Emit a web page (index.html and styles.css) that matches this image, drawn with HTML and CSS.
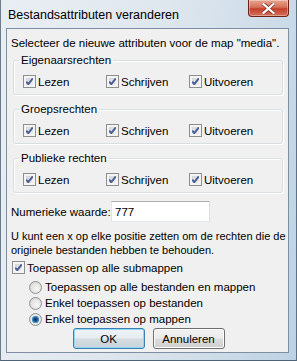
FILE: index.html
```html
<!DOCTYPE html>
<html lang="nl">
<head>
    <meta charset="UTF-8">
    <title>Bestandsattributen veranderen</title>
    <link rel="stylesheet" href="styles.css">
</head>
<body>
    <div class="window">
        <!-- Title bar -->
        <div class="titlebar">
            <span class="title">Bestandsattributen veranderen</span>
            <span class="close">
                <svg width="13" height="11" viewBox="0 0 13 11">
                    <path d="M1.5 1 L11.5 10 M11.5 1 L1.5 10" stroke="#7a2a20" stroke-width="3.6" stroke-linecap="square"/>
                    <path d="M1.5 1 L11.5 10 M11.5 1 L1.5 10" stroke="#ffffff" stroke-width="2.2" stroke-linecap="square"/>
                </svg>
            </span>
        </div>

        <div class="client">
            <p class="intro">Selecteer de nieuwe attributen voor de map "media".</p>

            <fieldset class="group">
                <legend>Eigenaarsrechten</legend>
                <div class="perm-row">
                    <label class="check"><span class="box checked"></span>Lezen</label>
                    <label class="check"><span class="box checked"></span>Schrijven</label>
                    <label class="check"><span class="box checked"></span>Uitvoeren</label>
                </div>
            </fieldset>

            <fieldset class="group">
                <legend>Groepsrechten</legend>
                <div class="perm-row">
                    <label class="check"><span class="box checked"></span>Lezen</label>
                    <label class="check"><span class="box checked"></span>Schrijven</label>
                    <label class="check"><span class="box checked"></span>Uitvoeren</label>
                </div>
            </fieldset>

            <fieldset class="group">
                <legend>Publieke rechten</legend>
                <div class="perm-row">
                    <label class="check"><span class="box checked"></span>Lezen</label>
                    <label class="check"><span class="box checked"></span>Schrijven</label>
                    <label class="check"><span class="box checked"></span>Uitvoeren</label>
                </div>
            </fieldset>

            <div class="numeric">
                <label for="waarde">Numerieke waarde:</label>
                <input type="text" id="waarde" value="777">
            </div>

            <p class="hint">U kunt een x op elke positie zetten om de rechten die de<br>originele bestanden hebben te behouden.</p>

            <label class="check submaps"><span class="box checked"></span>Toepassen op alle submappen</label>

            <div class="radios">
                <label class="radio"><span class="dot"></span>Toepassen op alle bestanden en mappen</label>
                <label class="radio"><span class="dot"></span>Enkel toepassen op bestanden</label>
                <label class="radio"><span class="dot selected"></span>Enkel toepassen op mappen</label>
            </div>

            <div class="buttons">
                <button class="btn default">OK</button>
                <button class="btn">Annuleren</button>
            </div>
        </div>
    </div>
</body>
</html>
```

FILE: styles.css
```css
/* Basic styling */
body {
    margin: 0;
    padding: 0;
    font-family: "Liberation Sans", Arial, sans-serif;
    font-size: 11.5px;
    color: #000;
}
p {
    margin: 0;
}

/* Window frame */
.window {
    width: 297px;
    height: 361px;
    box-sizing: border-box;
    padding: 0 7px 7px 5px;
    display: flex;
    flex-direction: column;
    background: linear-gradient(100deg, #e9eef3 0%, #dfe7ee 45%, #cfdde9 75%, #bcd2e4 100%);
    border-left: 1px solid #6b7b8a;
    border-right: 1px solid #5d7288;
    border-bottom: 1px solid #4f6377;
}
.titlebar {
    height: 28px;
    display: flex;
    justify-content: space-between;
    align-items: flex-start;
}
.title {
    font-size: 12.5px;
    margin-top: 8px;
    margin-left: 2px;
}
.close {
    width: 41px;
    height: 17px;
    box-sizing: border-box;
    display: flex;
    align-items: center;
    justify-content: center;
    border: 1px solid #6d2218;
    border-top: none;
    border-radius: 0 0 4px 4px;
    background: linear-gradient(180deg, #e8a692 0%, #d7705a 45%, #c3402b 55%, #d4705a 100%);
    box-shadow: inset 0 0 0 1px rgba(255, 255, 255, 0.35);
}

/* Client area */
.client {
    flex: 1;
    background-color: #f0f0f0;
    border: 1px solid #7e8fa1;
    padding: 7px 2px 0 4px;
    display: flex;
    flex-direction: column;
}
.intro {
    line-height: 15px;
}

/* Group boxes */
.group {
    margin: 2px 3px 0 2px;
    padding: 6px 0 4px 0;
    border: 1px solid #d5dfe5;
    border-radius: 3px;
    box-shadow: inset 1px 1px 0 #ffffff, 1px 1px 0 #ffffff;
}
.group legend {
    padding: 0 2px;
    margin-left: 5px;
    line-height: 14px;
}
.group + .group {
    margin-top: 7px;
}
.perm-row {
    display: grid;
    grid-template-columns: 83px 83px 83px;
    padding-left: 9px;
}

/* Checkboxes and radios */
.check, .radio {
    display: flex;
    align-items: center;
    height: 17px;
    white-space: nowrap;
}
.radio {
    height: 16px;
}
.box {
    width: 13px;
    height: 13px;
    box-sizing: border-box;
    margin-right: 2px;
    border: 1px solid #8e8f8f;
    background: linear-gradient(135deg, #cbcfd5 0%, #f6f6f6 100%);
    box-shadow: inset 0 0 0 2px #f4f4f4;
}
.box.checked {
    background: url("data:image/svg+xml;utf8,<svg xmlns='http://www.w3.org/2000/svg' width='11' height='11'><path d='M2.2 5.6 L4.3 8.2 L8.8 2.3' fill='none' stroke='%234a5e93' stroke-width='1.9'/></svg>") center no-repeat, linear-gradient(135deg, #cbcfd5 0%, #f6f6f6 100%);
}
.dot {
    width: 13px;
    height: 13px;
    box-sizing: border-box;
    margin-right: 3px;
    border-radius: 50%;
    border: 1px solid #8e8f8f;
    background: radial-gradient(circle at 60% 60%, #f7f7f7 0%, #dcdcdc 70%, #c5c5c5 100%);
}
.dot.selected {
    background: radial-gradient(circle at 50% 50%, #0b2a4a 0%, #1c5a93 25%, #5aa6d8 45%, #eaeaea 52%, #dadada 100%);
}

/* Numeric value */
.numeric {
    display: flex;
    align-items: center;
    margin-top: 8px;
}
.numeric label {
    width: 100px;
}
.numeric input {
    width: 99px;
    height: 21px;
    box-sizing: border-box;
    padding: 0 3px;
    border: 1px solid #abadb3;
    border-left-color: #e2e3ea;
    border-right-color: #dbdfe6;
    border-bottom-color: #e3e9ef;
    font: inherit;
    background: #fff;
}

.hint {
    margin-top: 7px;
    font-size: 11px;
    line-height: 14px;
    white-space: nowrap;
}
.submaps {
    margin-top: 2px;
    margin-left: 1px;
}
.radios {
    margin-top: 3px;
    margin-left: 18px;
}

/* Buttons */
.buttons {
    display: flex;
    justify-content: center;
    gap: 8px;
    margin-top: 1px;
}
.btn {
    width: 72px;
    height: 21px;
    border: 1px solid #707070;
    border-radius: 3px;
    font: inherit;
    color: #000;
    background: linear-gradient(180deg, #f2f2f2 0%, #ebebeb 48%, #dddddd 52%, #cfcfcf 100%);
    box-shadow: inset 0 0 0 1px #fcfcfc;
}
.btn.default {
    border-color: #3c7fb1;
    box-shadow: inset 0 0 0 1px #8fd7f5;
    background: linear-gradient(180deg, #f0f4f7 0%, #e6ecf0 48%, #d6dde2 52%, #c8d2d8 100%);
}
```
